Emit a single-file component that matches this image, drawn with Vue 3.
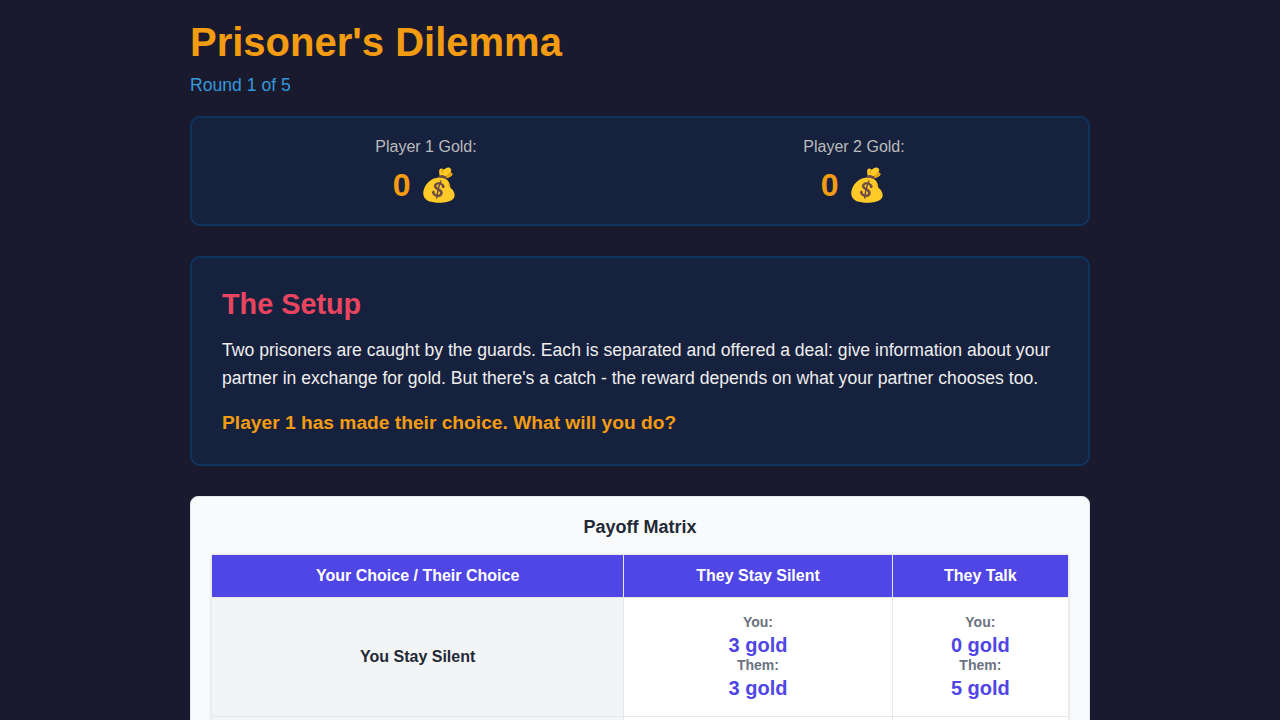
<script setup>
const players = [
  { name: 'Player 1 Gold:', gold: 0 },
  { name: 'Player 2 Gold:', gold: 0 },
]
const rows = [
  { label: 'You Stay Silent', cells: [[3, 3], [0, 5]] },
  { label: 'You Talk', cells: [[5, 0], [1, 1]] },
]
</script>

<template>
  <main class="game">
    <header class="header">
      <h1>Prisoner's Dilemma</h1>
      <div class="round">Round 1 of 5</div>
    </header>

    <section class="scores">
      <div v-for="p in players" :key="p.name" class="score">
        <span class="score-label">{{ p.name }}</span>
        <span class="score-value">{{ p.gold }} 💰</span>
      </div>
    </section>

    <section class="story">
      <h2>The Setup</h2>
      <p>Two prisoners are caught by the guards. Each is separated and offered a deal: give information about your partner in exchange for gold. But there's a catch - the reward depends on what your partner chooses too.</p>
      <p class="prompt">Player 1 has made their choice. What will you do?</p>
    </section>

    <section class="matrix">
      <h3>Payoff Matrix</h3>
      <table>
        <thead>
          <tr>
            <th>Your Choice / Their Choice</th>
            <th>They Stay Silent</th>
            <th>They Talk</th>
          </tr>
        </thead>
        <tbody>
          <tr v-for="row in rows" :key="row.label">
            <td class="row-label">{{ row.label }}</td>
            <td v-for="(cell, i) in row.cells" :key="i">
              <div class="who">You:</div>
              <div class="gold">{{ cell[0] }} gold</div>
              <div class="who">Them:</div>
              <div class="gold">{{ cell[1] }} gold</div>
            </td>
          </tr>
        </tbody>
      </table>
    </section>
  </main>
</template>

<style>
html, body { background: #1a1a2e; }
body { height: 720px; overflow: hidden; }
</style>

<style scoped>
* { box-sizing: border-box; margin: 0; padding: 0; }
.game {
  width: 900px;
  margin: 0 auto;
  padding-top: 20px;
  font-family: "Liberation Sans", Arial, sans-serif;
  font-size: 16px;
  line-height: 1.6;
  color: #eee;
}
.header { margin-bottom: 17px; }
h1 { font-size: 40px; line-height: 44px; color: #f39c12; margin-bottom: 7px; }
.round { font-size: 17.6px; line-height: 28px; color: #3498db; }
.scores {
  display: flex;
  justify-content: space-around;
  height: 110px;
  padding: 16px 20px 12px;
  background: #16213e;
  border: 2px solid #0f3460;
  border-radius: 10px;
  margin-bottom: 30px;
}
.score { display: flex; flex-direction: column; align-items: center; }
.score-label { color: #bbb; line-height: 26px; }
.score-value { font-size: 32px; font-weight: bold; line-height: 51px; color: #f39c12; }
.story {
  height: 210px;
  padding: 30px;
  background: #16213e;
  border: 2px solid #0f3460;
  border-radius: 10px;
  margin-bottom: 30px;
}
h2 { font-size: 28.8px; line-height: 32px; color: #e94560; margin-bottom: 16px; }
.story p { font-size: 17.6px; line-height: 28.16px; }
.story .prompt { font-size: 19.2px; line-height: 30px; font-weight: bold; color: #f39c12; margin-top: 16px; }
.matrix {
  padding: 20px;
  background: #f9fafb;
  border: 1px solid #e5e7eb;
  border-radius: 8px;
  color: #1f2937;
}
h3 { font-size: 18px; line-height: 21px; text-align: center; margin-bottom: 16px; }
table { width: 100%; border-collapse: collapse; background: #fff; box-shadow: 0 1px 3px rgba(0, 0, 0, .1); }
th, td { border: 1px solid #e5e7eb; padding: 12px; text-align: center; }
th { background: #4f46e5; color: #fff; line-height: 18px; }
td { padding: 16px 12px; }
.row-label { background: #f3f4f6; font-weight: bold; }
.who { margin-bottom: 4px; font-size: 14px; line-height: 16px; font-weight: bold; color: #6b7280; }
.gold { font-size: 20px; line-height: 23px; font-weight: bold; color: #4f46e5; }
</style>
